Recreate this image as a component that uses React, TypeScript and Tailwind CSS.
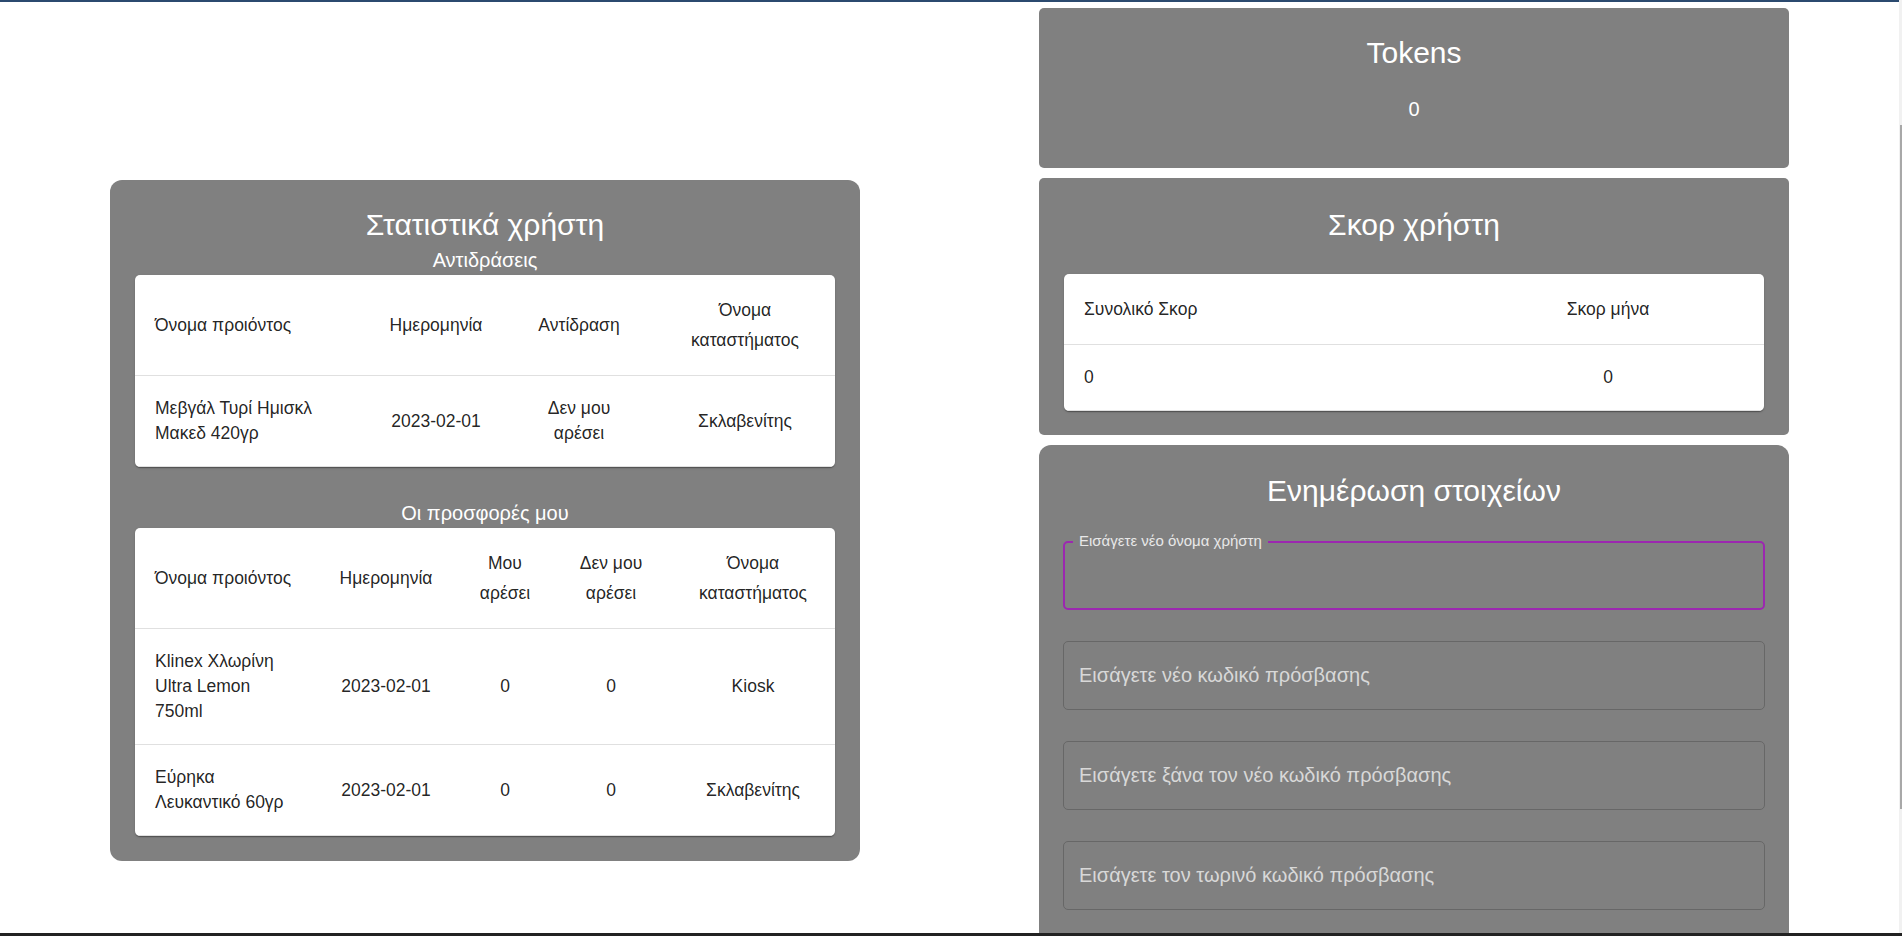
import React from "react";

type Col = { label: string[]; w: string; align: "left" | "center" };

function DataTable({ cols, rows }: { cols: Col[]; rows: string[][][] }) {
  return (
    <table className="w-full table-fixed border-collapse text-[17.5px] text-[rgba(0,0,0,0.87)]">
      <thead>
        <tr>
          {cols.map((c, i) => (
            <th
              key={i}
              className={`${c.w} ${c.align === "left" ? "text-left" : "text-center"} border-b border-[#e0e0e0] px-[20px] py-[20px] font-normal leading-[30px]`}
            >
              {c.label.map((l, j) => (
                <div key={j}>{l}</div>
              ))}
            </th>
          ))}
        </tr>
      </thead>
      <tbody>
        {rows.map((r, ri) => (
          <tr key={ri}>
            {r.map((cell, ci) => (
              <td
                key={ci}
                className={`${cols[ci].align === "left" ? "text-left" : "text-center"} border-b border-[#e0e0e0] px-[20px] py-[20px] leading-[25px]`}
              >
                {cell.map((l, j) => (
                  <div key={j} className="whitespace-nowrap">
                    {l}
                  </div>
                ))}
              </td>
            ))}
          </tr>
        ))}
      </tbody>
    </table>
  );
}

const cardCls =
  "overflow-hidden rounded-[5px] bg-white shadow-[0_2px_1px_-1px_rgba(0,0,0,0.2),0_1px_1px_0_rgba(0,0,0,0.14),0_1px_3px_0_rgba(0,0,0,0.12)]";

export default function App() {
  return (
    <div className="relative h-[936px] w-[1902px] overflow-hidden bg-white font-['Liberation_Sans',Arial,sans-serif]">
      <div className="h-[2px] w-full bg-[#2b4a6f]" />
      <div className="flex items-start">
        {/* Left column */}
        <div className="ml-[110px] mt-[178px] w-[750px] rounded-[12px] bg-[#808080] px-[25px] pb-[25px] pt-[25px] text-white">
          <div className="text-center text-[30px] leading-[40px]">Στατιστικά χρήστη</div>
          <div className="text-center text-[20px] leading-[30px]">Αντιδράσεις</div>
          <div className={cardCls}>
            <DataTable
              cols={[
                { label: ["Όνομα προιόντος"], w: "w-[233px]", align: "left" },
                { label: ["Ημερομηνία"], w: "w-[136px]", align: "center" },
                { label: ["Αντίδραση"], w: "w-[150px]", align: "center" },
                { label: ["Όνομα", "καταστήματος"], w: "w-[182px]", align: "center" },
              ]}
              rows={[
                [
                  ["Μεβγάλ Τυρί Ημισκλ", "Μακεδ 420γρ"],
                  ["2023-02-01"],
                  ["Δεν μου", "αρέσει"],
                  ["Σκλαβενίτης"],
                ],
              ]}
            />
          </div>
          <div className="mt-[31px] text-center text-[20px] leading-[30px]">Οι προσφορές μου</div>
          <div className={cardCls}>
            <DataTable
              cols={[
                { label: ["Όνομα προιόντος"], w: "w-[179px]", align: "left" },
                { label: ["Ημερομηνία"], w: "w-[144px]", align: "center" },
                { label: ["Μου", "αρέσει"], w: "w-[94px]", align: "center" },
                { label: ["Δεν μου", "αρέσει"], w: "w-[118px]", align: "center" },
                { label: ["Όνομα", "καταστήματος"], w: "w-[166px]", align: "center" },
              ]}
              rows={[
                [["Klinex Χλωρίνη", "Ultra Lemon", "750ml"], ["2023-02-01"], ["0"], ["0"], ["Kiosk"]],
                [["Εύρηκα", "Λευκαντικό 60γρ"], ["2023-02-01"], ["0"], ["0"], ["Σκλαβενίτης"]],
              ]}
            />
          </div>
        </div>

        {/* Right column */}
        <div className="ml-[179px] mt-[6px] flex w-[750px] flex-col gap-[10px] text-white">
          <div className="rounded-[5px] bg-[#808080] px-[25px] pb-[44px] pt-[25px] text-center">
            <div className="text-[30px] leading-[40px]">Tokens</div>
            <div className="mt-[21px] text-[20px] leading-[30px]">0</div>
          </div>

          <div className="rounded-[5px] bg-[#808080] px-[25px] pb-[24px] pt-[27px]">
            <div className="mb-[29px] text-center text-[30px] leading-[40px]">Σκορ χρήστη</div>
            <div className={cardCls}>
              <DataTable
                cols={[
                  { label: ["Συνολικό Σκορ"], w: "w-[388px]", align: "left" },
                  { label: ["Σκορ μήνα"], w: "w-[312px]", align: "center" },
                ]}
                rows={[[["0"], ["0"]]]}
              />
            </div>
          </div>

          <div className="rounded-[12px] bg-[#808080] px-[24px] pb-[40px] pt-[26px]">
            <div className="text-center text-[30px] leading-[40px]">Ενημέρωση στοιχείων</div>
            <div className="relative mt-[30px] h-[69px] rounded-[5px] border-2 border-[#9c27b0]">
              <span className="absolute left-[8px] top-[-11px] bg-[#808080] px-[6px] text-[15px] leading-[18px] text-[#e8e8e8]">
                Εισάγετε νέο όνομα χρήστη
              </span>
              <input className="h-full w-full bg-transparent px-[14px] text-[20px] text-white outline-none" />
            </div>
            {[
              "Εισάγετε νέο κωδικό πρόσβασης",
              "Εισάγετε ξάνα τον νέο κωδικό πρόσβασης",
              "Εισάγετε τον τωρινό κωδικό πρόσβασης",
            ].map((p) => (
              <input
                key={p}
                placeholder={p}
                className="mt-[31px] block h-[69px] w-full rounded-[5px] border border-[#676767] bg-transparent px-[15px] text-[20px] text-white outline-none placeholder:text-[#d8d8d8]"
              />
            ))}
            <div className="h-[60px]" />
          </div>
        </div>
      </div>

      {/* scrollbar */}
      <div className="absolute right-0 top-0 h-full w-[3px] bg-[#f1f1f1]">
        <div className="absolute right-0 top-[125px] h-[684px] w-[2px] bg-[#a8a8a8]" />
      </div>
      {/* bottom bar */}
      <div className="absolute bottom-0 left-0 h-[3px] w-full bg-[#222222]" />
    </div>
  );
}
